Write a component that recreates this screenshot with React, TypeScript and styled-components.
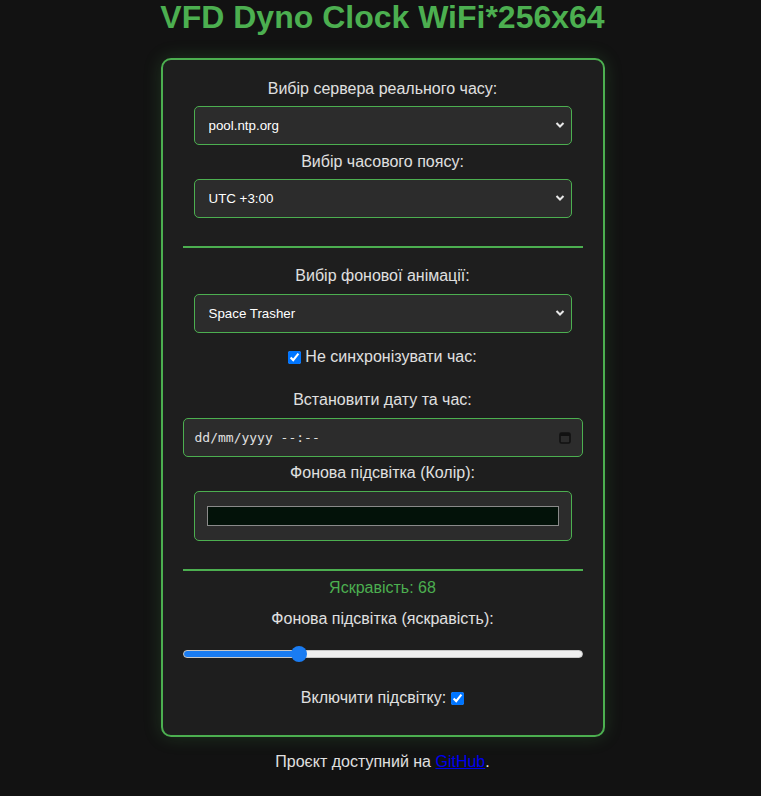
import React from 'react';
import styled, { createGlobalStyle } from 'styled-components';

const GlobalStyle = createGlobalStyle`
  body {
    margin: 0;
    background: #121212;
    color: #e0e0e0;
    font-family: Arial, "Liberation Sans", sans-serif;
    font-size: 16px;
  }
`;

const Page = styled.div`
  display: flex;
  flex-direction: column;
  align-items: center;
  padding-left: 4px;
`;

const Title = styled.h1`
  margin: 1px 0 0;
  font-size: 32px;
  line-height: 32px;
  font-weight: bold;
  color: #4caf50;
`;

const Card = styled.div`
  margin-top: 25px;
  width: 400px;
  padding: 20px;
  background: #1e1e1e;
  border: 2px solid #4caf50;
  border-radius: 10px;
  box-shadow: 0 0 18px rgba(76, 175, 80, 0.22);
  display: flex;
  flex-direction: column;
  align-items: center;
`;

const Label = styled.div<{ $mt?: number; $mb?: number }>`
  line-height: 18px;
  margin-top: ${(p) => p.$mt ?? 0}px;
  margin-bottom: ${(p) => p.$mb ?? 8}px;
  text-align: center;
  color: #e0e0e0;
`;

const SelectWrap = styled.div`
  position: relative;
  width: 378px;
`;

const Select = styled.select`
  appearance: none;
  width: 100%;
  height: 39px;
  box-sizing: border-box;
  padding: 0 14px;
  background: #2c2c2c;
  color: #ffffff;
  border: 1px solid #4caf50;
  border-radius: 5px;
  font-family: Arial, "Liberation Sans", sans-serif;
  font-size: 13.33px;
  outline: none;
`;

const Chevron = styled.svg`
  position: absolute;
  right: 7px;
  top: 15px;
  pointer-events: none;
`;

const Divider = styled.div<{ $mt: number; $mb: number }>`
  width: 400px;
  height: 2px;
  background: #4caf50;
  margin-top: ${(p) => p.$mt}px;
  margin-bottom: ${(p) => p.$mb}px;
`;

const CheckRow = styled.label<{ $mt?: number; $mb?: number; $gap?: number }>`
  display: flex;
  align-items: center;
  gap: ${(p) => p.$gap ?? 4}px;
  line-height: 18px;
  margin-top: ${(p) => p.$mt ?? 0}px;
  margin-bottom: ${(p) => p.$mb ?? 0}px;
  color: #e0e0e0;

  input {
    margin: 0;
    width: 13px;
    height: 13px;
  }
`;

const DateBox = styled.div`
  width: 400px;
  height: 39px;
  box-sizing: border-box;
  padding: 0 11px;
  display: flex;
  align-items: center;
  justify-content: space-between;
  background: #2c2c2c;
  border: 1px solid #4caf50;
  border-radius: 5px;
  font-family: "DejaVu Sans Mono", "Liberation Mono", monospace;
  font-size: 13px;
  color: #e0e0e0;
`;

const ColorBox = styled.div`
  width: 378px;
  height: 50px;
  box-sizing: border-box;
  padding: 0 12px;
  display: flex;
  align-items: center;
  background: #2c2c2c;
  border: 1px solid #4caf50;
  border-radius: 5px;
`;

const Swatch = styled.div<{ $color: string }>`
  flex: 1;
  height: 20px;
  box-sizing: border-box;
  border: 1px solid #8a8a8a;
  background: ${(p) => p.$color};
`;

const Brightness = styled.div`
  color: #4caf50;
  line-height: 18px;
  margin-top: 8px;
`;

const Range = styled.input`
  appearance: none;
  width: 400px;
  height: 8px;
  margin: 22px 0 0;
  border-radius: 4px;
  border: 1px solid #c8c8c8;
  box-sizing: border-box;
  outline: none;

  &::-webkit-slider-thumb {
    appearance: none;
    width: 16px;
    height: 16px;
    border-radius: 50%;
    background: #1a7cf2;
    border: none;
  }
`;

const Footer = styled.p`
  margin: 16px 0 0;
  line-height: 18px;
  color: #e0e0e0;

  a {
    color: #0000ee;
  }
`;

function ChevronIcon() {
  return (
    <Chevron width="10" height="8" viewBox="0 0 10 8">
      <path d="M1.5 2 L5 5.5 L8.5 2" fill="none" stroke="#e8e8e8" strokeWidth="2" />
    </Chevron>
  );
}

export default function App() {
  const value = 68;
  const max = 242;
  const pct = (((value / max) * (400 - 16) + 8) / 400) * 100;
  return (
    <Page>
      <GlobalStyle />
      <Title>VFD Dyno Clock WiFi*256x64</Title>
      <Card>
        <Label $mb={8}>Вибір сервера реального часу:</Label>
        <SelectWrap>
          <Select defaultValue="pool.ntp.org">
            <option>pool.ntp.org</option>
          </Select>
          <ChevronIcon />
        </SelectWrap>
        <Label $mt={8}>Вибір часового поясу:</Label>
        <SelectWrap>
          <Select defaultValue="UTC +3:00">
            <option>UTC +3:00</option>
          </Select>
          <ChevronIcon />
        </SelectWrap>
        <Divider $mt={28} $mb={19} />
        <Label $mb={9}>Вибір фонової анімації:</Label>
        <SelectWrap>
          <Select defaultValue="Space Trasher">
            <option>Space Trasher</option>
          </Select>
          <ChevronIcon />
        </SelectWrap>
        <CheckRow $mt={15}>
          <input type="checkbox" defaultChecked />
          Не синхронізувати час:
        </CheckRow>
        <Label $mt={25} $mb={9}>Встановити дату та час:</Label>
        <DateBox>
          <span>dd/mm/yyyy --:--</span>
          <svg width="12" height="13" viewBox="0 0 12 13">
            <rect x="1" y="2" width="10" height="10" rx="1.5" fill="none" stroke="#111" strokeWidth="1.6" />
            <rect x="1" y="2" width="10" height="3" fill="#111" />
          </svg>
        </DateBox>
        <Label $mt={7} $mb={9}>Фонова підсвітка (Колір):</Label>
        <ColorBox>
          <Swatch $color="#031209" />
        </ColorBox>
        <Divider $mt={28} $mb={0} />
        <Brightness>Яскравість: {value}</Brightness>
        <Label $mt={13} $mb={0}>Фонова підсвітка (яскравість):</Label>
        <Range
          type="range"
          min={0}
          max={max}
          defaultValue={value}
          style={{
            background: `linear-gradient(to right, #1a7cf2 ${pct}%, #efefef ${pct}%)`,
          }}
        />
        <CheckRow $mt={31} $mb={8} $gap={5}>
          Включити підсвітку:
          <input type="checkbox" defaultChecked />
        </CheckRow>
      </Card>
      <Footer>
        Проєкт доступний на <a href="#">GitHub</a>.
      </Footer>
    </Page>
  );
}
